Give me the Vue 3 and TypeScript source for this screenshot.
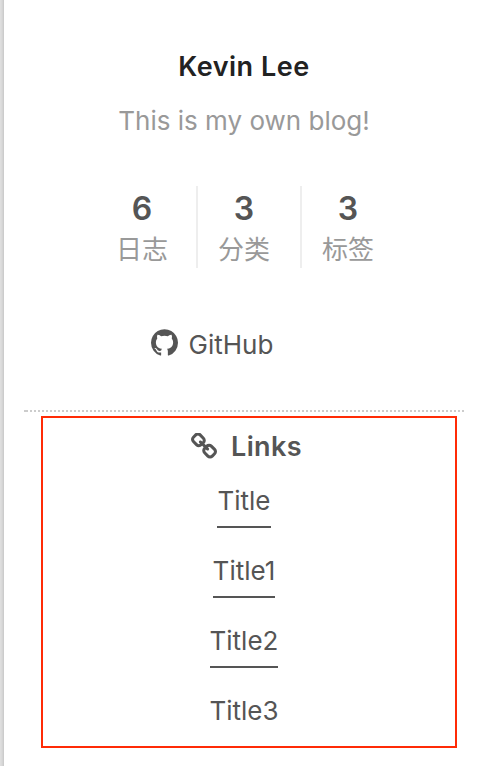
<script setup lang="ts">
interface Stat {
  count: number
  label: string
}

const stats: Stat[] = [
  { count: 6, label: '日志' },
  { count: 3, label: '分类' },
  { count: 3, label: '标签' },
]

const links: string[] = ['Title', 'Title1', 'Title2', 'Title3']
</script>

<template>
  <aside class="sidebar">
    <div class="inner">
      <h1 class="author">Kevin Lee</h1>
      <p class="description">This is my own blog!</p>

      <nav class="stats">
        <a v-for="stat in stats" :key="stat.label" class="stat">
          <span class="count">{{ stat.count }}</span>
          <span class="label">{{ stat.label }}</span>
        </a>
      </nav>

      <a class="github">
        <svg class="github-icon" viewBox="0 0 1536 1504" aria-hidden="true">
          <path
            fill="currentColor"
            d="M768 0q209 0 385.500 103t279.500 279.500 103 385.500q0 251-146.500 451.500t-378.500 277.500q-27 5-40-7t-13-30q0-3 .5-76.500t.5-134.500q0-97-52-142 57-6 102.500-18t94-39 81-66.500 53-105 20.500-150.500q0-119-79-206 37-91-8-204-28-9-81 11t-92 44l-38 24q-93-26-192-26t-192 26q-16-11-42.500-27t-83.500-38.500-85-13.500q-45 113-8 204-79 87-79 206 0 85 20.500 150t52.500 105 80.500 67 94 39 102.500 18q-39 36-49 103-21 10-45 15t-57 5-65.500-21.500-55.500-62.500q-19-32-48.500-52t-49.500-24l-20-3q-21 0-29 4.500t-5 11.500 9 14 13 12l7 5q22 10 43.500 38t31.500 51l10 23q13 38 44 61.500t67 30 69.500 7 55.500-3.500l23-4q0 38 .5 88.500t.5 54.500q0 18-13 30t-40 7q-232-77-378.500-277.500t-146.500-451.500q0-209 103-385.500t279.500-279.500 385.500-103z"
          />
        </svg>
        <span>GitHub</span>
      </a>

      <hr class="divider" />

      <section class="links">
        <h2 class="links-title">
          <svg class="chain-icon" viewBox="16 48 1632 1632" aria-hidden="true">
            <path
              fill="currentColor"
              d="M1456 1216q0-40-28-68l-208-208q-28-28-68-28-42 0-72 32 3 3 19 18.500t21.500 21.500 15 19 13 25.500 3.500 27.500q0 40-28 68t-68 28q-15 0-27.500-3.500t-25.500-13-19-15-21.500-21.500-18.500-19q-33 31-33 73 0 40 28 68l206 207q27 27 68 27 40 0 68-26l147-146q28-28 28-67zm-703-705q0-40-28-68l-206-207q-28-28-68-28-39 0-68 27l-147 146q-28 28-28 67 0 40 28 68l208 208q27 27 68 27 42 0 72-31-3-3-19-18.500t-21.500-21.500-15-19-13-25.500-3.500-27.500q0-40 28-68t68-28q15 0 27.500 3.500t25.500 13 19 15 21.500 21.500 18.500 19q33-31 33-73zm895 705q0 120-85 203l-147 146q-83 83-203 83-121 0-204-85l-206-207q-83-83-83-203 0-123 88-209l-88-88q-86 88-208 88-120 0-204-84l-208-208q-84-84-84-204t85-203l147-146q83-83 203-83 121 0 204 85l206 207q83 83 83 203 0 123-88 209l88 88q86-88 208-88 120 0 204 84l208 208q84 84 84 204z"
            />
          </svg>
          <span>Links</span>
        </h2>
        <ul class="link-list">
          <li v-for="link in links" :key="link"><a class="link">{{ link }}</a></li>
        </ul>
      </section>
    </div>
  </aside>
</template>

<style>
body {
  background: #fff;
}
</style>

<style scoped>
.sidebar {
  box-sizing: border-box;
  width: 482px;
  height: 766px;
  overflow: hidden;
  padding-left: 24px;
  background: linear-gradient(90deg, #e0e0e0 0, #d8d8d8 2px, #c8c8c8 4px, #fff 4px);
  color: #555;
  font-family: Inter, "Noto Sans CJK SC", sans-serif;
  font-size: 26px;
}

.inner {
  display: flex;
  flex-direction: column;
  align-items: center;
  width: 440px;
  padding-top: 47px;
}

.author {
  margin: 0;
  color: #222;
  font-size: 27px;
  font-weight: 600;
  line-height: 40px;
  letter-spacing: 0.5px;
}

.description {
  margin: 14px 0 0;
  color: #999;
  line-height: 40px;
}

.stats {
  display: flex;
  margin: 45px 0 0 2px;
}

.stat {
  display: flex;
  flex-direction: column;
  align-items: center;
  box-sizing: border-box;
  height: 82px;
  padding: 2px 20px 0;
}

.stat + .stat {
  margin-left: 10px;
  border-left: 2px solid #eee;
}

.stat:first-child {
  margin-right: -2px;
}

.count {
  font-size: 32px;
  font-weight: 600;
  line-height: 42px;
}

.label {
  color: #999;
  line-height: 39px;
}

.github {
  display: flex;
  align-items: center;
  gap: 11px;
  height: 40px;
  margin: 56px 64px 0 0;
}

.github-icon {
  width: 27px;
  height: 27px;
  margin-bottom: 4px;
}

.divider {
  width: 440px;
  height: 2px;
  margin: 46px 0 4px;
  border: 0;
  background:
    linear-gradient(#ccc, #ccc) 0 0 / 2px 2px no-repeat,
    repeating-linear-gradient(90deg, transparent 0 2px, #ccc 2px 4px);
}

.links {
  display: flex;
  flex-direction: column;
  align-items: center;
  box-sizing: border-box;
  width: 416px;
  height: 332px;
  margin-left: 10px;
  padding: 9px 10px 0 0;
  border: 2px solid #ff2b06;
}

.links-title {
  display: flex;
  align-items: center;
  gap: 14px;
  margin: 0 0 0 5px;
  font-size: 27px;
  font-weight: 600;
  line-height: 40px;
  letter-spacing: 0.4px;
}

.chain-icon {
  width: 26px;
  height: 26px;
  margin-bottom: 3px;
}

.link-list {
  display: flex;
  flex-direction: column;
  align-items: center;
  gap: 22px;
  margin: 13px 0 0;
  padding: 0;
  list-style: none;
}

.link {
  display: block;
  box-sizing: border-box;
  height: 48px;
  border-bottom: 2px solid #555;
  line-height: 42px;
}

li:last-child .link {
  border-bottom: 0;
}
</style>
